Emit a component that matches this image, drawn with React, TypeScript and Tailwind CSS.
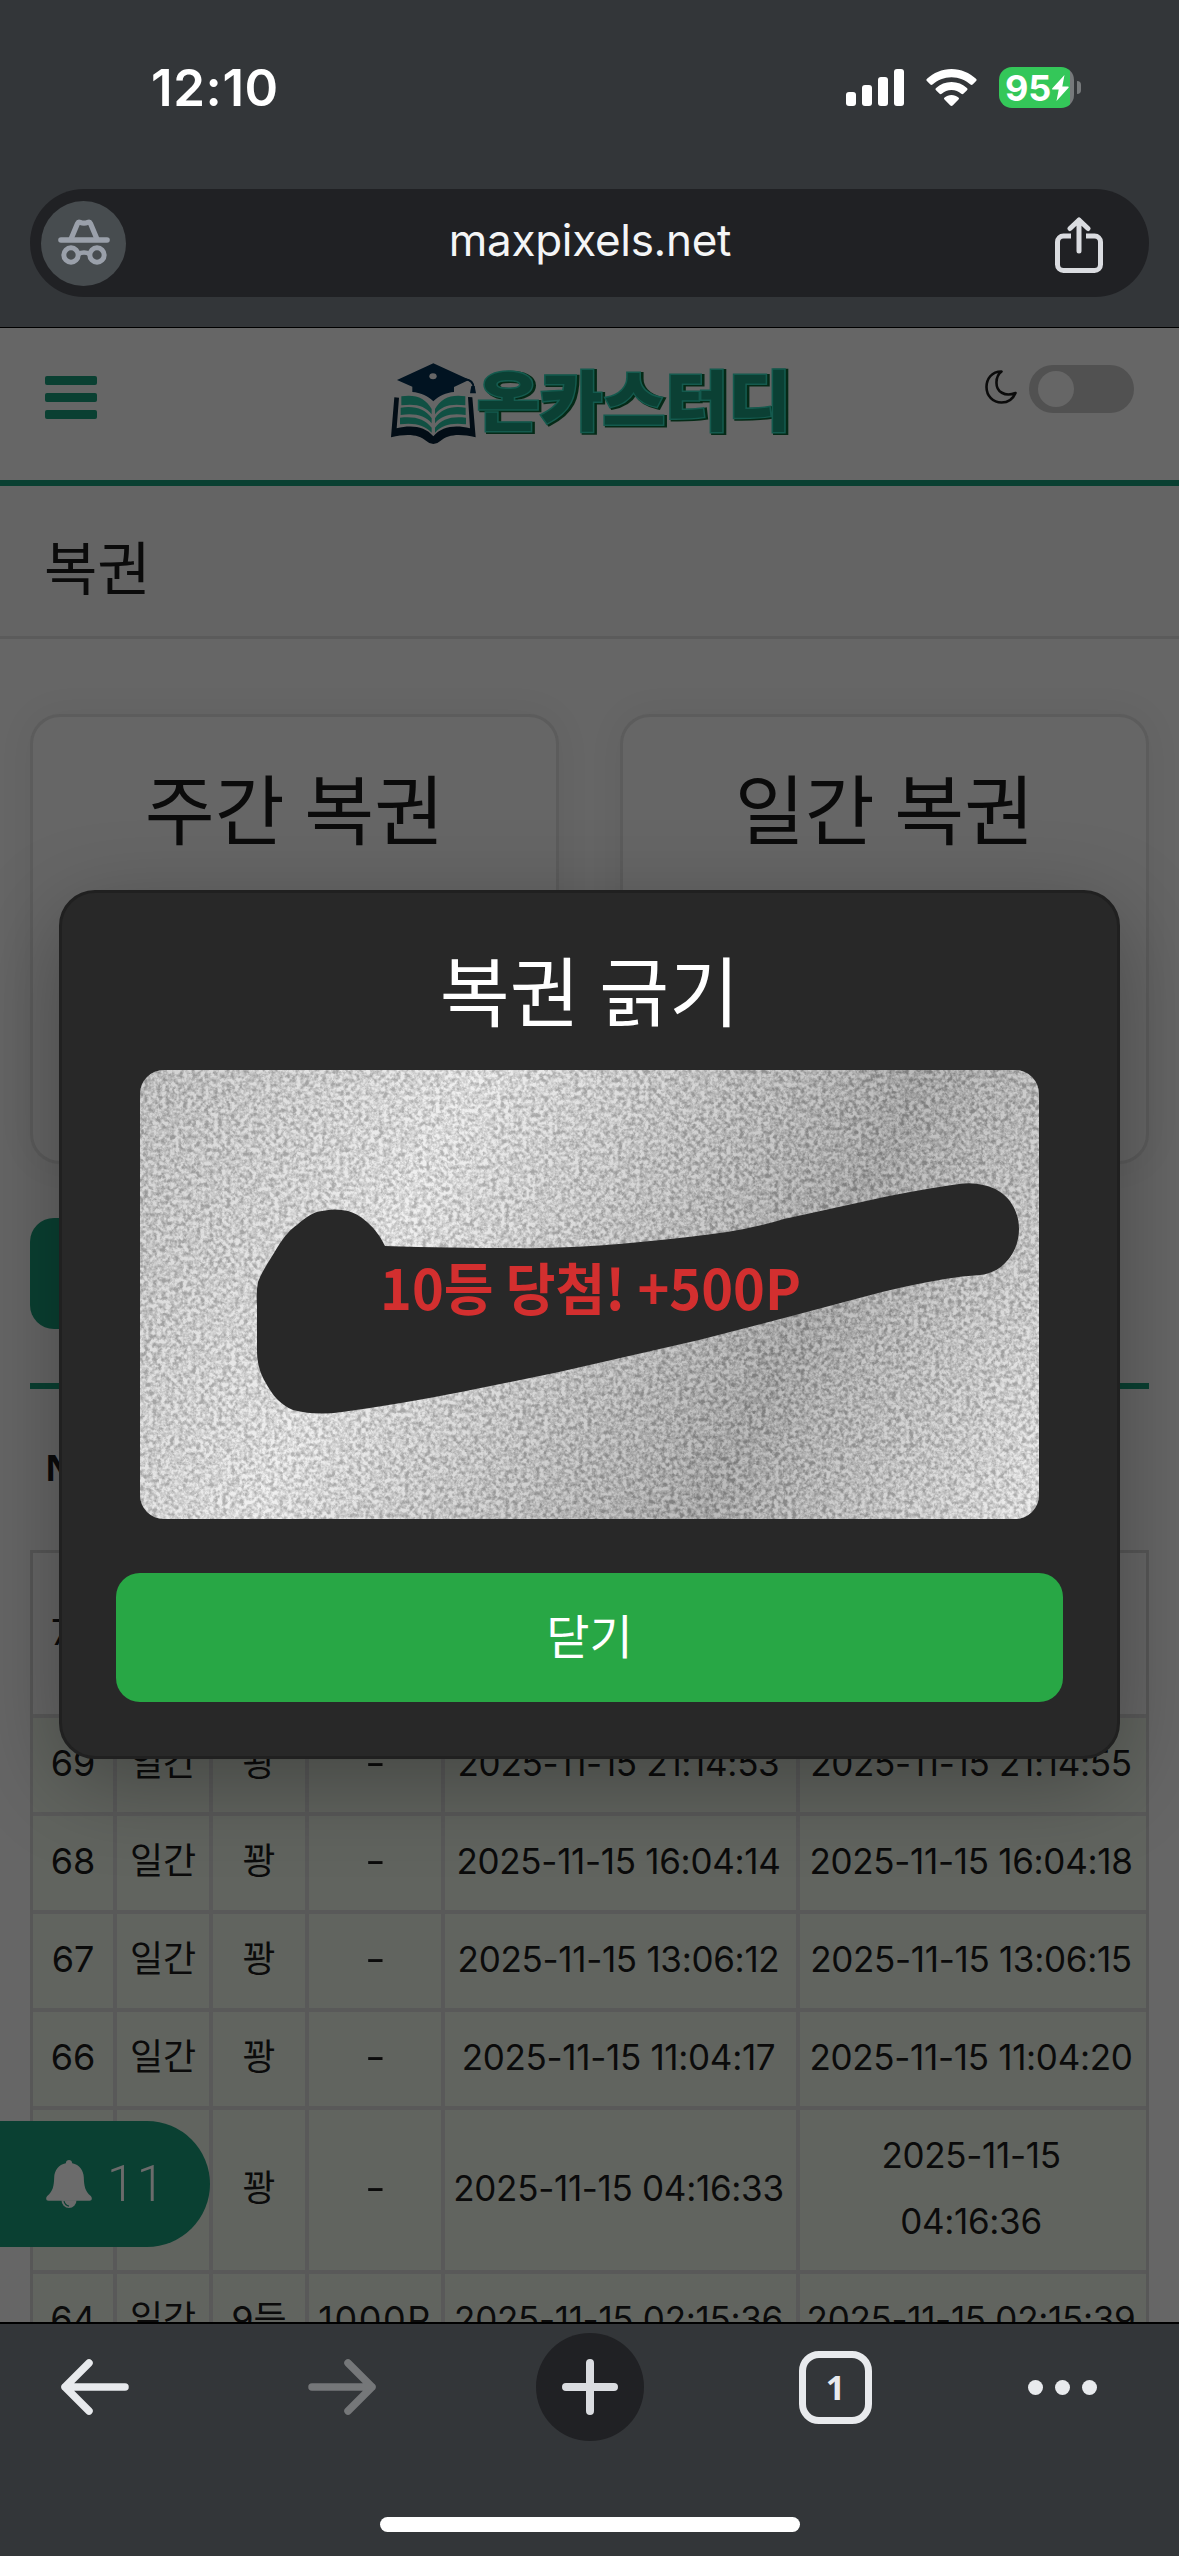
import type { ReactNode } from "react";

type Row = {
  no: string;
  kind: string;
  result: string;
  prize: string;
  bought: string;
  opened: string;
  height: number;
};

const rows: Row[] = [
  { no: "69", kind: "일간", result: "꽝", prize: "-", bought: "2025-11-15 21:14:53", opened: "2025-11-15 21:14:55", height: 98 },
  { no: "68", kind: "일간", result: "꽝", prize: "-", bought: "2025-11-15 16:04:14", opened: "2025-11-15 16:04:18", height: 98 },
  { no: "67", kind: "일간", result: "꽝", prize: "-", bought: "2025-11-15 13:06:12", opened: "2025-11-15 13:06:15", height: 98 },
  { no: "66", kind: "일간", result: "꽝", prize: "-", bought: "2025-11-15 11:04:17", opened: "2025-11-15 11:04:20", height: 98 },
  // first two cells sit under the notification pill
  { no: "", kind: "", result: "꽝", prize: "-", bought: "2025-11-15 04:16:33", opened: "2025-11-15 04:16:36", height: 164 },
  { no: "64", kind: "일간", result: "9등", prize: "1000P", bought: "2025-11-15 02:15:36", opened: "2025-11-15 02:15:39", height: 98 }
];

const columns = "grid grid-cols-[84px_96px_96px_136px_355px_346px]";

function StatusBar() {
  return (
    <div className="flex h-[189px] items-start justify-between pt-[67px] pr-[98px] pl-[151px] font-['Inter'] text-white">
      <div className="text-[51px] leading-[41px] font-semibold tracking-[0.6px]">12:10</div>
      <div className="flex h-[41px] items-center">
        <svg width="58" height="37" viewBox="0 0 58 37" fill="#fff">
          <rect x="0" y="23" width="10" height="14" rx="3" />
          <rect x="16" y="16" width="10" height="21" rx="3" />
          <rect x="32" y="8" width="10" height="29" rx="3" />
          <rect x="48" y="0" width="10" height="37" rx="3" />
        </svg>
        <svg className="ml-[22px]" width="51" height="37" viewBox="0 0 51 37" fill="#fff">
          <path d="M25.500 0C35 0 43.500 3.800 50 9.800c.8.800.8 1.600.1 2.300l-3.500 3.500c-.6.600-1.400.6-2.100 0C39.500 11 33 8.200 25.500 8.200S11.500 11 6.500 15.600c-.7.600-1.500.6-2.100 0L.9 12.100c-.7-.7-.7-1.500.1-2.300C7.500 3.800 16 0 25.500 0Z" />
          <path d="M25.500 13c6 0 11.300 2.300 15.400 6 .8.800.8 1.500.1 2.200l-3.600 3.600c-.7.700-1.400.6-2.100 0-2.600-2.300-6-3.700-9.800-3.700s-7.200 1.400-9.800 3.700c-.7.600-1.400.7-2.100 0L10 21.200c-.7-.7-.7-1.400.1-2.200 4.100-3.700 9.400-6 15.400-6Z" />
          <path d="M25.500 26c2.700 0 5 .9 6.900 2.500.8.700.8 1.400.1 2.100l-5.600 5.700c-.9.900-1.900.9-2.800 0l-5.600-5.700c-.7-.7-.7-1.400.1-2.100 1.900-1.600 4.200-2.500 6.900-2.500Z" />
        </svg>
        <div className="ml-[22px] flex h-[41px] w-[75px] items-center overflow-hidden rounded-[13px] bg-[linear-gradient(to_right,#34c759_71px,#76797b_71px)] pl-[6px]">
          <span className="text-[36px] leading-none font-bold tracking-[-0.2px]">95</span>
          <svg className="ml-[1px] shrink-0" width="17" height="26" viewBox="0 0 17 26" fill="#fff">
            <path d="M12.500 0 .4 13.200c-.6.700-.3 1.300.6 1.300h5.700L4.500 26 16.500 12.700c.6-.7.300-1.300-.6-1.300h-5.600Z" />
          </svg>
        </div>
        <div className="ml-[3px] h-[13px] w-[4px] rounded-r-full bg-[#76797b]" />
      </div>
    </div>
  );
}

function AddressBar() {
  return (
    <div className="mx-[30px] flex h-[108px] items-center justify-between rounded-[54px] bg-[#202124] pr-[46px] pl-[11px]">
      <div className="flex size-[85px] items-center justify-center rounded-full bg-[#474c4f]">
        <svg className="-mt-[3px]" width="52" height="46" viewBox="0 0 52 46" fill="none" stroke="#9aa0aa" strokeLinecap="round" strokeLinejoin="round">
          <path d="M3 21h46" strokeWidth="5.600" />
          <path d="m13 20 6.500-15.500c.6-1.400 1.500-1.700 2.700-1.200 2.500 1 5.100 1 7.600 0 1.200-.5 2.100-.2 2.700 1.200L39 20" strokeWidth="5.200" />
          <circle cx="13" cy="36" r="7.200" strokeWidth="5" />
          <circle cx="39" cy="36" r="7.200" strokeWidth="5" />
          <path d="M20.500 35c3-2 8-2 11 0" strokeWidth="4.600" />
        </svg>
      </div>
      <div className="mr-[9px] mb-[6px] ml-[8px] font-['Inter'] text-[44px] tracking-[-0.3px] text-[#f4f5f6]">maxpixels.net</div>
      <svg className="mt-1" width="48" height="57" viewBox="0 0 48 57" fill="none" stroke="#dadce0" strokeWidth="5">
        <path d="M16 19H8.500a6 6 0 0 0-6 6v22.500a6 6 0 0 0 6 6h31a6 6 0 0 0 6-6V25a6 6 0 0 0-6-6H31" />
        <path d="M24 34V3M15 11.500 24 3l9 8.500" strokeLinecap="round" strokeLinejoin="round" />
      </svg>
    </div>
  );
}

function Logo() {
  return (
    <div className="flex items-center">
      <svg width="87" height="83" viewBox="90 65 261 249">
        <path d="M103 171 93 291c50-13 84-8 105 10q22 20 44 0c21-18 55-23 105-10l-10-120-13-1 6 94c-44-11-85-6-110 24-25-30-66-35-110-24l7-92Z" fill="#020d16" />
        <g fill="#105043">
          <path d="M124 168c42-7 73 5 91 38v16c-20-25-46-33-91-27Z" />
          <path d="M122 202c42-6 73 3 93 32v15c-20-23-48-31-93-25Z" />
          <path d="M120 232c44-5 74 3 95 30v15c-22-22-50-31-95-25Z" />
          <path d="M316 168c-42-7-73 5-91 38v16c20-25 46-33 91-27Z" />
          <path d="M317 202c-42-6-73 3-92 32v15c20-23 47-31 92-25Z" />
          <path d="M318 232c-43-5-73 3-93 30v15c20-22 48-31 93-25Z" />
        </g>
        <path d="m220 69 108 49-46 22v15c-24 2-44 10-62 28-18-18-39-26-63-28v-16l-46-20Z" fill="#011321" />
        <path d="M316 117c17 2 24 10 24 24" fill="none" stroke="#011321" strokeWidth="6" />
        <path d="M334 137h10l4 22h-18Z" fill="#011321" />
        <ellipse cx="219" cy="108" rx="11" ry="9" fill="#666" />
      </svg>
      <svg width="314" height="72" viewBox="0 0 314 72" className="overflow-visible font-['Noto_Sans_CJK_KR'] text-[65px] font-black">
        <text x="2" y="58" textLength="314" lengthAdjust="spacingAndGlyphs" fill="#052a17" stroke="#052a17" strokeWidth="4">온카스터디</text>
        <text x="0" y="57" textLength="314" lengthAdjust="spacingAndGlyphs" fill="#0b4436" stroke="#145a4e" strokeWidth="3">온카스터디</text>
        <text x="0" y="57" textLength="314" lengthAdjust="spacingAndGlyphs" fill="#0b4034">온카스터디</text>
      </svg>
    </div>
  );
}

function SiteHeader() {
  return (
    <header className="flex h-[158px] items-start justify-between border-b-[6px] border-[#0a4032] pr-[45px] pl-[45px]">
      <div className="mt-[48px] flex w-[149px] flex-col gap-[8px]">
        <span className="h-[9px] w-[52px] rounded-[2px] bg-[#0a4032]" />
        <span className="h-[9px] w-[52px] rounded-[2px] bg-[#0a4032]" />
        <span className="h-[9px] w-[52px] rounded-[2px] bg-[#0a4032]" />
      </div>
      <div className="mt-[34px] ml-[2px]">
        <Logo />
      </div>
      <div className="mt-[37px] flex w-[149px] items-center gap-[12px]">
        <svg className="-mt-1" width="32" height="34" viewBox="0 0 32 34" fill="none" stroke="#0b0b0b" strokeWidth="2.600" strokeLinejoin="round">
          <path d="M16.500 1.500C6.500 1.500 1.500 9 1.500 17c0 9 6.500 15.500 15 15.500 6.500 0 11.500-3.500 14-9.500C20 27 11 22 11.500 12c.1-4.500 1.800-8 5-10.500Z" />
        </svg>
        <div className="flex h-[48px] w-[105px] items-center rounded-full bg-[#515151] pl-[9px]">
          <span className="size-[36px] rounded-full bg-[#666]" />
        </div>
      </div>
    </header>
  );
}

function Card({ children }: { children: ReactNode }) {
  return (
    <div className="h-[450px] w-[529px] rounded-[30px] border-[3px] border-[#5c5c5c] pt-[38px] text-center text-[76px] leading-[110px] shadow-[0_0_36px_rgba(0,0,0,0.06)]">
      {children}
    </div>
  );
}

function Cell({ children, last, date }: { children: ReactNode; last?: boolean; date?: boolean }) {
  return (
    <div
      className={`flex items-center justify-center border-b-4 border-[#595959] text-center ${
        last ? "" : "border-r-4"
      } ${date ? "pr-[4px] pb-[4px] text-[35px] tracking-[-0.3px]" : "pb-[5px] text-[36px]"}`}
    >
      {children}
    </div>
  );
}

function HistoryTable() {
  return (
    <div className="mt-[54px] border-t-[6px] border-[#0a4032]">
      <div className="flex h-[161px] items-center pb-[4px] pl-[15px] text-[36px] font-bold">No</div>
      <div className="border-[3px] border-b-0 border-[#575757] font-['Inter','Noto_Sans_CJK_KR',sans-serif] leading-[66px]">
        <div className="flex h-[165px] items-center border-b-4 border-[#595959] pb-[4px] pl-[18px] text-[36px]">70</div>
        {rows.map((row) => (
          <div key={row.bought} className={`${columns} bg-[#61645f]`} style={{ height: row.height }}>
            <Cell>{row.no}</Cell>
            <Cell>{row.kind}</Cell>
            <Cell>{row.result}</Cell>
            <Cell>
              <span className={row.prize === "-" ? "scale-x-125" : "tracking-[1.5px]"}>{row.prize}</span>
            </Cell>
            <Cell date>{row.bought}</Cell>
            <Cell date last>
              {row.height > 100 ? (
                <span>
                  {row.opened.slice(0, 10)}
                  <br />
                  {row.opened.slice(11)}
                </span>
              ) : (
                <span className="whitespace-nowrap">{row.opened}</span>
              )}
            </Cell>
          </div>
        ))}
      </div>
    </div>
  );
}

function ScratchTicket() {
  return (
    <svg width="899" height="449" viewBox="0 0 899 449" className="rounded-[24px]">
      <defs>
        <linearGradient id="foil" gradientUnits="userSpaceOnUse" x1="0" y1="0" x2="899" y2="449">
          <stop offset="0" stopColor="#c2c2c2" />
          <stop offset="0.300" stopColor="#ececec" />
          <stop offset="0.700" stopColor="#a4a4a4" />
          <stop offset="1" stopColor="#ececec" />
        </linearGradient>
        <filter id="grain" x="0" y="0" width="100%" height="100%" colorInterpolationFilters="sRGB">
          <feTurbulence type="fractalNoise" baseFrequency="0.230" numOctaves="3" seed="7" />
          <feColorMatrix values="1.800 1.800 0 0 -1.200  1.800 1.800 0 0 -1.200  1.800 1.800 0 0 -1.200  0 0 0 0 0.240" />
        </filter>
      </defs>
      <rect width="899" height="449" fill="url(#foil)" />
      <rect width="899" height="449" filter="url(#grain)" />
      <path
        d="M118 212C122 201 130 190 137 178 145 165 151 159 157 155 167 146 174 142 182 141Q195 138 208 141C218 144 222 148 227 152 235 159 240 166 245 176Q310 178 370 178 430 179 490 173 545 168 587 162 618 157 644 149L749 126Q790 118 819 114 832 112 843 115C865 119 879 137 879 159 879 183 862 203 840 205Q822 206 805 209 775 214 742 222L644 248 559 270 419 302 321 322Q260 334 202 342 176 346 153 340C141 335 133 326 127 315 118 301 117 288 117 280V235Q116 222 118 212Z"
        fill="#282828"
      />
      <text x="240" y="240" textLength="421" lengthAdjust="spacingAndGlyphs" fill="#d32f2f" className="font-['Noto_Sans_CJK_KR'] text-[56px] font-bold">
        10등 당첨! +500P
      </text>
    </svg>
  );
}

function ScratchModal() {
  return (
    <div className="absolute top-[562px] left-[59px] flex h-[869px] w-[1061px] flex-col items-center rounded-[36px] border-[3px] border-[#202020] bg-[#282828] shadow-[0_24px_90px_rgba(0,0,0,0.300)]">
      <h2 className="mt-[44px] text-[76px] leading-[110px] text-white">복권 긁기</h2>
      <div className="mt-[23px] h-[449px]">
        <ScratchTicket />
      </div>
      <button className="mt-[54px] h-[129px] w-[947px] rounded-[24px] bg-[#28a745] pb-[3px] text-[47px] text-white">닫기</button>
    </div>
  );
}

function Page() {
  return (
    <main className="relative h-[1994px] overflow-hidden bg-[#666] font-['Noto_Sans','Noto_Sans_CJK_KR',sans-serif] text-[#0b0b0b]">
      <SiteHeader />
      <h1 className="flex h-[153px] items-center border-b-[3px] border-[#5b5b5b] bg-[#646464] pt-[12px] pl-[44px] text-[58px]">복권</h1>
      <div className="px-[30px]">
        <div className="mt-[75px] flex justify-between">
          <Card>주간 복권</Card>
          <Card>일간 복권</Card>
        </div>
        <div className="mt-[54px] h-[111px] w-1/2 rounded-[24px] bg-[#0a4032]" />
        <HistoryTable />
      </div>
      <div className="absolute top-[1793px] left-0 flex h-[126px] w-[210px] items-center rounded-r-full bg-[#0a4032] pl-[46px] text-[#6b6b6b]">
        <svg width="46" height="48" viewBox="0 0 46 46" preserveAspectRatio="none" fill="#6b6b6b">
          <path d="M23 0c1.700 0 3 1.100 3.200 3 7.300 1.200 11.300 6.900 11.600 13.500.3 8.500 1.200 13.300 7 18 1.900 2 1 4.500-1.300 4.500H2.500C.2 39-.7 36.500 1.200 34.500c5.800-4.700 6.700-9.500 7-18C8.500 9.900 12.500 4.200 19.800 3 20 1.100 21.300 0 23 0Z" />
          <path d="M15.500 38.500a7.500 7.500 0 0 0 15 0Z" />
          <path d="M18 39.500q1 4 5 4.700" fill="none" stroke="#0a4032" strokeWidth="1.200" />
        </svg>
        <span className="ml-[15px] font-['Roboto'] text-[50px] font-light tracking-[2px]">11</span>
      </div>
      <ScratchModal />
    </main>
  );
}

function Toolbar() {
  return (
    <nav className="flex h-[234px] flex-col items-center border-t-2 border-black bg-[#333639]">
      <div className="mt-[9px] flex h-[108px] w-full items-center pl-[59px]">
        <svg width="70" height="62" viewBox="0 0 70 62" fill="none" stroke="#e8eaed" strokeWidth="7.500" strokeLinecap="round" strokeLinejoin="round">
          <path d="M66 31H6M30 7 6 31l24 24" />
        </svg>
        <svg className="ml-[179px]" width="70" height="62" viewBox="0 0 70 62" fill="none" stroke="#757779" strokeWidth="7.500" strokeLinecap="round" strokeLinejoin="round">
          <path d="M4 31h60M40 7l24 24-24 24" />
        </svg>
        <div className="ml-[158px] flex size-[108px] items-center justify-center rounded-full bg-[#202124]">
          <svg width="56" height="56" viewBox="0 0 56 56" stroke="#dadce0" strokeWidth="8" strokeLinecap="round">
            <path d="M28 4v48M4 28h48" />
          </svg>
        </div>
        <div className="ml-[155px] flex size-[73px] items-center justify-center rounded-[20px] border-[7px] border-[#e8eaed] font-['Open_Sans'] text-[34px] font-bold text-[#e8eaed]">
          1
        </div>
        <div className="ml-[156px] flex gap-[12px]">
          <span className="size-[15px] rounded-full bg-[#e8eaed]" />
          <span className="size-[15px] rounded-full bg-[#e8eaed]" />
          <span className="size-[15px] rounded-full bg-[#e8eaed]" />
        </div>
      </div>
      <div className="mt-[76px] h-[15px] w-[420px] rounded-full bg-white" />
    </nav>
  );
}

export default function App() {
  return (
    <div className="h-[2556px] w-[1179px] overflow-hidden bg-[#333639]">
      <StatusBar />
      <AddressBar />
      <div className="h-[31px] border-b border-black" />
      <Page />
      <Toolbar />
    </div>
  );
}
